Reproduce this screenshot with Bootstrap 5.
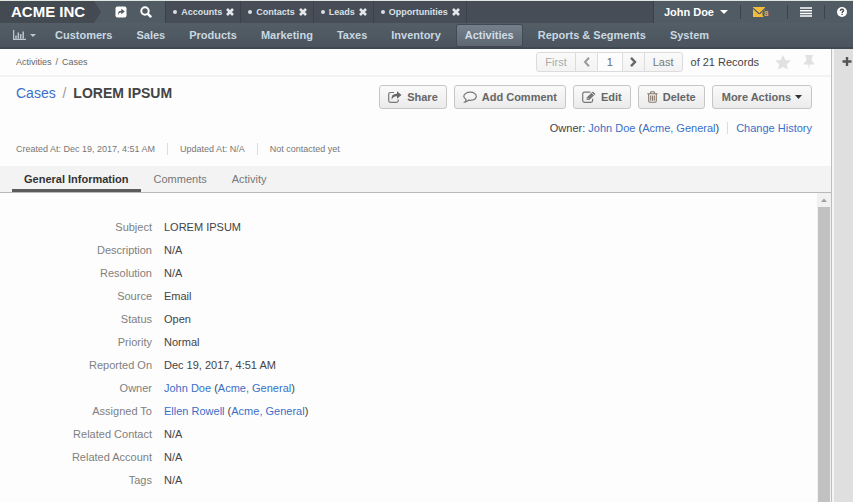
<!DOCTYPE html>
<html lang="en">
<head>
<meta charset="utf-8">
<meta name="viewport" content="width=device-width, initial-scale=1">
<title>Cases - LOREM IPSUM</title>
<link href="https://cdn.jsdelivr.net/npm/bootstrap@5.3.0/dist/css/bootstrap.min.css" rel="stylesheet">
<style>
body{font-family:"Liberation Sans",Arial,sans-serif;font-size:11px;line-height:16px;color:#444;background:#fdfdfd}
a{color:#3a6fc9;text-decoration:none}
a:hover{text-decoration:underline}
svg{display:block;flex:none}
button{font:inherit}
.top-bar{height:23px;background:#464d56;border-top:1px solid #dfe5df;color:#fff}
.brand{font-size:15px;font-weight:700;color:#fff;padding:0 9px 0 11px;background:#434a52}
.tools{background:#515b64;gap:13px;padding-right:13px}
.bare{border:0;background:none;padding:0;color:inherit}
.pin-item{gap:4px;padding:0 6px 0 7px;border-left:1px solid #3a4149;font-size:9px;font-weight:700;color:#d9e0e6}
.pin-item:last-child{border-right:1px solid #3a4149}
.pin-item a{color:inherit}
.bullet{width:4px;height:4px;border-radius:50%;background:#d9e0e6}
.user-area{background:#515b64;border-left:1px solid #3a4149;padding-right:6px}
.user-area>button{height:22px}
.user-name{font-weight:700;gap:6px;padding:0 12px 0 10px}
.divided{border-left:1px solid #3b434b;height:14px!important}
.main-nav{height:26px;background:linear-gradient(#535e66,#4b545e);border-bottom:2px solid #414854;padding-left:13px}
.main-nav .nav-link{font-weight:700;color:#c9d8e0;padding:2px 8px;margin:0 4px;border:0;line-height:17px;border-radius:2px}
.main-nav .nav-link.active{background:linear-gradient(#747f8b,#5d6873);box-shadow:0 0 0 1px #414a53;color:#d0dde4}
.reports-menu{color:#b9c6ce;gap:4px;margin-right:7px}
.crumb-bar{height:28px;padding:0 16px;border-bottom:2px solid #f3f3f3}
.crumbs{font-size:9px;color:#666;gap:4px}
.crumbs a{color:inherit}
.pager{border:1px solid #dcdcdc;border-radius:3px;background:linear-gradient(#fafafa,#f3f3f3);color:#777}
.pager>*{height:18px;border:0;background:none;padding:0 8px;color:inherit}
.pager>*+*{border-left:1px solid #dcdcdc}
.pager .step{padding:0 7px}
.pager .off{color:#aaa}
.pager input{width:25px;text-align:center;background:#fdfdfd;color:#666;border-radius:0}
.title-row{padding:8px 19px 0 16px}
.page-title{font-size:14px;line-height:16px;margin:0}
.page-title a,.page-title span{font-weight:400}
.page-title span{color:#999;margin:0 3px}
.actions{gap:7px}
.action{height:24px;border:1px solid #c6c6c6;border-radius:3px;background:linear-gradient(#fafafa,#ebebeb);color:#666;font-weight:700;gap:5px;padding:0 8px}
.action:last-child{padding:0 9px;gap:4px}
.owner-row{padding:11px 19px 0}
.vline{border-left:1px solid #ddd;height:12px}
.meta{font-size:9px;color:#777;padding:5px 16px 9px;gap:12px}
.tab-strip{background:#f3f3f3;border-bottom:1px solid #b9b9b9;padding-left:12px;gap:1px}
.tab-strip .nav-link{padding:4px 12px 1px;border-bottom:3px solid transparent;color:#777;line-height:18px;height:26px}
.tab-strip .nav-link.active{color:#333;font-weight:700;border-color:#5c5c5c}
.fields{display:grid;grid-template-columns:152px 1fr;column-gap:12px;line-height:23px;padding-top:23px;margin:0}
.fields dt{font-weight:400;color:#808080;text-align:right}
.fields dd{margin:0;color:#444}
.scroll-track{width:14px;background:#f1f1f1}
.scroll-thumb{background:#c1c1c1;margin:0 1px}
.side-bar{width:22px;border-left:1px solid #bdbdbd;background:#f4f4f4;padding-left:2px}
.side-bar>div{background:#dfdfdf;color:#555;padding:5px 0 0 8px}
</style>
<script src="https://cdn.jsdelivr.net/npm/bootstrap@5.3.0/dist/js/bootstrap.bundle.min.js"></script>
</head>
<body class="vh-100 d-flex flex-column overflow-hidden">
<header>
  <div class="top-bar d-flex align-items-stretch">
    <a class="brand d-flex align-items-center" href="#">ACME INC</a>
    <div class="tools d-flex align-items-center">
      <svg width="8" height="22" viewBox="0 0 8 22"><path d="M0 0L7 11L0 22Z" fill="#434a52"/></svg>
      <button class="bare" aria-label="Shortcuts"><svg width="12" height="12" viewBox="0 0 12 12"><rect x=".5" y=".5" width="11" height="11" rx="2" fill="#fff"/><path d="M3 9.2C2.6 6 4 4.8 6.3 4.7V2.8L9.8 5.6L6.3 8.3V6.5C4.6 6.4 3.6 7.2 3 9.2Z" fill="#515b64"/></svg></button>
      <button class="bare" aria-label="Search"><svg width="12" height="12" viewBox="0 0 12 12" fill="none" stroke="#fff" stroke-width="2"><circle cx="5" cy="5" r="3.7"/><path d="M7.8 7.8L11.2 11.2" stroke-width="2.4"/></svg></button>
    </div>
    <div class="d-flex">
      <div class="pin-item d-flex align-items-center"><i class="bullet"></i><a href="#">Accounts</a><button class="bare" aria-label="Close Accounts"><svg width="8" height="8" viewBox="0 0 8 8"><path d="M1 1L7 7M7 1L1 7" stroke="#e3e7ea" stroke-width="2.6"/></svg></button></div>
      <div class="pin-item d-flex align-items-center"><i class="bullet"></i><a href="#">Contacts</a><button class="bare" aria-label="Close Contacts"><svg width="8" height="8" viewBox="0 0 8 8"><path d="M1 1L7 7M7 1L1 7" stroke="#e3e7ea" stroke-width="2.6"/></svg></button></div>
      <div class="pin-item d-flex align-items-center"><i class="bullet"></i><a href="#">Leads</a><button class="bare" aria-label="Close Leads"><svg width="8" height="8" viewBox="0 0 8 8"><path d="M1 1L7 7M7 1L1 7" stroke="#e3e7ea" stroke-width="2.6"/></svg></button></div>
      <div class="pin-item d-flex align-items-center"><i class="bullet"></i><a href="#">Opportunities</a><button class="bare" aria-label="Close Opportunities"><svg width="8" height="8" viewBox="0 0 8 8"><path d="M1 1L7 7M7 1L1 7" stroke="#e3e7ea" stroke-width="2.6"/></svg></button></div>
    </div>
    <div class="user-area d-flex align-items-center ms-auto">
      <button class="bare user-name d-flex align-items-center">John Doe<svg width="8" height="4" viewBox="0 0 8 4"><path d="M0 0H8L4 4Z" fill="#fff"/></svg></button>
      <button class="bare divided d-flex align-items-center ps-2 pe-3" aria-label="8 unread emails"><svg class="ms-1" width="18" height="10" viewBox="0 0 18 10"><path d="M0 0H12V3A4 4 0 0 0 11 10H0Z" fill="#f2bd3d"/><path d="M0 1.2L5.5 6.3Q6.3 6.8 7.2 6.2L12 1.5" fill="none" stroke="#515b64" stroke-width="1.2"/><text x="11" y="8.5" font-size="8" font-weight="700" fill="#f0a860">8</text></svg></button>
      <button class="bare divided d-flex align-items-center px-2" aria-label="Menu"><svg class="mx-1" width="12" height="10" viewBox="0 0 12 10"><path d="M0 1H12M0 3.7H12M0 6.4H12M0 9.1H12" stroke="#fff" stroke-width="1.5"/></svg></button>
      <button class="bare divided d-flex align-items-center ps-2" aria-label="Help"><svg class="ms-1" width="10" height="10" viewBox="0 0 10 10"><circle cx="5" cy="5" r="5" fill="#fff"/><path d="M3.3 3.9Q3.5 2.2 5.1 2.3Q6.8 2.5 6.5 3.9Q5.1 4.7 5.1 5.9M5.1 6.7V8.1" fill="none" stroke="#464d56" stroke-width="1.4"/></svg></button>
    </div>
  </div>
  <nav class="main-nav d-flex align-items-center">
    <button class="bare reports-menu d-flex align-items-center" aria-label="Dashboards"><svg width="13" height="10" viewBox="0 0 13 10"><path d="M.5 0V9.5H13M3 5.5V8.5M5.3 2.5V8.5M7.7 4V8.5M10.2 1.5V8.5" fill="none" stroke="currentColor" stroke-width="1.5"/></svg><svg width="6" height="3" viewBox="0 0 6 3"><path d="M0 0H6L3 3Z" fill="currentColor"/></svg></button>
    <a class="nav-link" href="#">Customers</a>
    <a class="nav-link" href="#">Sales</a>
    <a class="nav-link" href="#">Products</a>
    <a class="nav-link" href="#">Marketing</a>
    <a class="nav-link" href="#">Taxes</a>
    <a class="nav-link" href="#">Inventory</a>
    <a class="nav-link active" href="#" aria-current="page">Activities</a>
    <a class="nav-link" href="#">Reports &amp; Segments</a>
    <a class="nav-link" href="#">System</a>
  </nav>
</header>
<div class="d-flex flex-grow-1 overflow-hidden">
  <main class="d-flex flex-column flex-grow-1 overflow-hidden">
    <div class="crumb-bar d-flex align-items-center">
      <div class="crumbs d-flex"><a href="#">Activities</a><span>/</span><a href="#">Cases</a></div>
      <div class="pager d-flex align-items-center ms-auto">
        <button class="off">First</button>
        <button class="off step" aria-label="Previous"><svg width="7" height="10" viewBox="0 0 7 10"><path d="M6 .8L2 5L6 9.2" fill="none" stroke="#999" stroke-width="2"/></svg></button>
        <input type="text" value="1" aria-label="Record number">
        <button class="step" aria-label="Next"><svg width="7" height="10" viewBox="0 0 7 10"><path d="M1 .8L5 5L1 9.2" fill="none" stroke="#666" stroke-width="2.4"/></svg></button>
        <button>Last</button>
      </div>
      <span class="ms-2 me-3">of 21 Records</span>
      <button class="bare" aria-label="Favorite"><svg width="16" height="15" viewBox="0 0 16 15"><path d="M8 0L10.3 4.9L15.7 5.5L11.8 9.2L12.8 14.5L8 11.9L3.2 14.5L4.2 9.2L.3 5.5L5.7 4.9Z" fill="#e1e1e1"/></svg></button>
      <button class="bare ms-2 ps-1" aria-label="Pin page"><svg width="12" height="15" viewBox="0 0 12 15"><path d="M2.2 0H9.8V1.8H8.8V6.2Q11.5 7.3 11.5 9.6H6.7L6 15L5.3 9.6H.5Q.5 7.3 3.2 6.2V1.8H2.2Z" fill="#e1e1e1"/></svg></button>
    </div>
    <div class="title-row d-flex align-items-start justify-content-between">
      <h1 class="page-title"><a href="#">Cases</a> <span>/</span> <b>LOREM IPSUM</b></h1>
      <div class="actions d-flex">
        <button class="action d-flex align-items-center"><svg width="14" height="12" viewBox="0 0 14 12"><path d="M6 1.5H2.5Q.7 1.5 .7 3.3V9.5Q.7 11.3 2.5 11.3H8.5Q10.3 11.3 10.3 9.5V8.5" fill="none" stroke="#777" stroke-width="1.2"/><path d="M3.8 8.8Q2.5 3 9 2.8V.3L13.5 4L9 7.7V5.3Q5 5 3.8 8.8Z" fill="#666"/></svg>Share</button>
        <button class="action d-flex align-items-center"><svg width="14" height="12" viewBox="0 0 14 12"><path d="M7.2 1.2C10.8 1.2 13.3 3 13.3 5.3C13.3 7.6 10.8 9.3 7.2 9.3Q6.3 9.3 5.5 9.2Q4 10.8 1.8 11.1Q3 10 3.1 8.6Q.8 7.3 .8 5.3C.8 3 3.6 1.2 7.2 1.2Z" fill="none" stroke="#777" stroke-width="1.2"/></svg>Add Comment</button>
        <button class="action d-flex align-items-center"><svg width="14" height="12" viewBox="0 0 14 12"><path d="M8.5 1.2H2.5Q.7 1.2 .7 3V9.5Q.7 11.3 2.5 11.3H8.8Q10.6 11.3 10.6 9.5V7.7" fill="none" stroke="#777" stroke-width="1.2"/><path d="M4.7 9.1V6.4L10.8.4L13.4 3L7.4 9.1Z" fill="#777"/><path d="M5.6 7.1L6.8 8.3M9.7 1.8L12 4.1" stroke="#f4f4f4" stroke-width=".8"/></svg>Edit</button>
        <button class="action d-flex align-items-center"><svg width="11" height="12" viewBox="0 0 11 12"><path d="M.3 2.7H10.7M3.3 2.5L4 .7H7L7.7 2.5M1.7 3V10Q1.8 11.3 2.8 11.3H8.2Q9.2 11.3 9.3 10V3M3.7 4.5V9.7M5.5 4.5V9.7M7.3 4.5V9.7" fill="none" stroke="#85796d" stroke-width="1.1"/></svg>Delete</button>
        <button class="action d-flex align-items-center"><span>More Actions</span><svg width="7" height="4" viewBox="0 0 7 4"><path d="M0 0H7L3.5 4Z" fill="#333"/></svg></button>
      </div>
    </div>
    <div class="owner-row d-flex justify-content-end align-items-center gap-2">
      <span>Owner: <a href="#">John Doe</a> (<a href="#">Acme, General</a>)</span><i class="vline"></i><a href="#">Change History</a>
    </div>
    <div class="meta d-flex align-items-center">
      <span>Created At: Dec 19, 2017, 4:51 AM</span><i class="vline"></i><span>Updated At: N/A</span><i class="vline"></i><span>Not contacted yet</span>
    </div>
    <nav class="tab-strip d-flex">
      <a class="nav-link active" href="#" aria-current="true">General Information</a>
      <a class="nav-link" href="#">Comments</a>
      <a class="nav-link" href="#">Activity</a>
    </nav>
    <div class="d-flex flex-grow-1 overflow-hidden">
      <dl class="fields flex-grow-1 align-content-start">
        <dt>Subject</dt><dd>LOREM IPSUM</dd>
        <dt>Description</dt><dd>N/A</dd>
        <dt>Resolution</dt><dd>N/A</dd>
        <dt>Source</dt><dd>Email</dd>
        <dt>Status</dt><dd>Open</dd>
        <dt>Priority</dt><dd>Normal</dd>
        <dt>Reported On</dt><dd>Dec 19, 2017, 4:51 AM</dd>
        <dt>Owner</dt><dd><a href="#">John Doe</a> (<a href="#">Acme, General</a>)</dd>
        <dt>Assigned To</dt><dd><a href="#">Ellen Rowell</a> (<a href="#">Acme, General</a>)</dd>
        <dt>Related Contact</dt><dd>N/A</dd>
        <dt>Related Account</dt><dd>N/A</dd>
        <dt>Tags</dt><dd>N/A</dd>
      </dl>
      <div class="scroll-track d-flex flex-column"><svg width="14" height="14" viewBox="0 0 14 14"><path d="M4 9H10L7 5.5Z" fill="#a0a0a0"/></svg><div class="scroll-thumb flex-grow-1"></div></div>
    </div>
  </main>
  <aside class="side-bar d-flex"><div class="flex-grow-1"><button class="bare" aria-label="Add widget"><svg width="10" height="9" viewBox="0 0 10 9"><path d="M5 0V9M.5 4.5H9.5" stroke="#555" stroke-width="2.4"/></svg></button></div></aside>
</div>
</body>
</html>
